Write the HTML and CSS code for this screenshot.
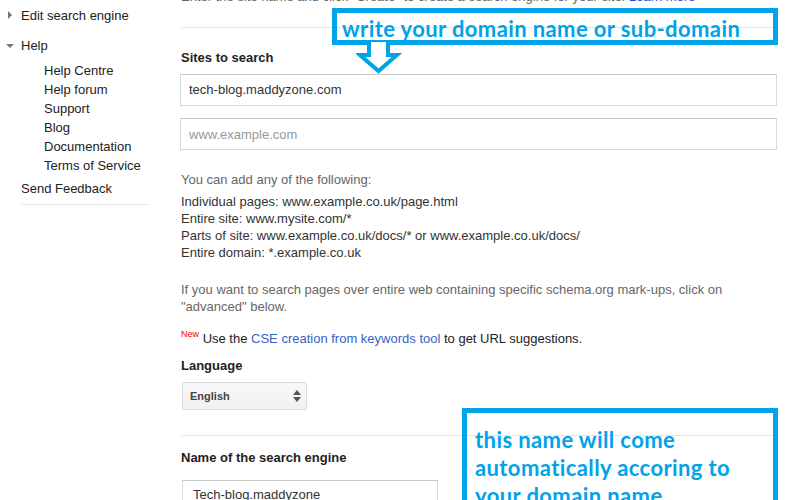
FILE: index.html
```html
<!DOCTYPE html>
<html>
<head>
<meta charset="utf-8">
<link rel="stylesheet" href="styles.css">
</head>
<body>
<div class="page">
  <aside class="sidebar">
    <div class="nav-item"><span class="tri tri-right"></span>Edit search engine</div>
    <div class="nav-item nav-help"><span class="tri tri-down"></span>Help</div>
    <ul class="sub">
      <li>Help Centre</li>
      <li>Help forum</li>
      <li>Support</li>
      <li>Blog</li>
      <li>Documentation</li>
      <li>Terms of Service</li>
    </ul>
    <div class="feedback">Send Feedback</div>
    <div class="side-rule"></div>
  </aside>
  <main class="main">
    <p class="intro">Enter the site name and click "Create" to create a search engine for your site. <a class="link-top">Learn more</a></p>
    <div class="rule rule-top"></div>
    <h3 class="label label-sites">Sites to search</h3>
    <div class="input input-first">tech-blog.maddyzone.com</div>
    <div class="input input-second placeholder">www.example.com</div>
    <p class="gray p-add">You can add any of the following:</p>
    <div class="examples">
      <div>Individual pages: www.example.co.uk/page.html</div>
      <div>Entire site: www.mysite.com/*</div>
      <div>Parts of site: www.example.co.uk/docs/* or www.example.co.uk/docs/</div>
      <div>Entire domain: *.example.co.uk</div>
    </div>
    <p class="gray p-schema">If you want to search pages over entire web containing specific schema.org mark-ups, click on<br>"advanced" below.</p>
    <p class="p-new"><sup class="new">New</sup> Use the <a class="link">CSE creation from keywords tool</a> to get URL suggestions.</p>
    <h3 class="label label-lang">Language</h3>
    <div class="select">
      <span>English</span>
      <svg class="sel-arrows" width="8" height="12" viewBox="0 0 8 12"><polygon points="4,0 8,5 0,5" fill="#555"/><polygon points="0,7 8,7 4,12" fill="#555"/></svg>
    </div>
    <div class="rule rule-mid"></div>
    <h3 class="label label-name">Name of the search engine</h3>
    <div class="input input-name">Tech-blog.maddyzone</div>
  </main>
</div>

<div class="note note-top">write your domain name or sub-domain</div>
<svg class="note-arrow" width="46" height="36" viewBox="0 0 46 36"><polygon points="13,0 13,15 4,15 22.5,31 41,15 32,15 32,0" fill="#fff" stroke="#00a2e8" stroke-width="4" stroke-linejoin="miter"/></svg>
<div class="note note-bottom">this name will come<br>automatically accoring to<br>your domain name</div>
</body>
</html>
```

FILE: styles.css
```css
html, body {
  margin: 0;
  padding: 0;
  background: #fff;
  overflow: hidden;
  height: 500px;
}
body {
  font-family: "Liberation Sans", Arial, sans-serif;
  font-size: 13px;
  line-height: 17px;
  color: #222;
}
.page {
  display: flex;
  align-items: flex-start;
}
.sidebar {
  width: 181px;
  flex: none;
  padding-top: 7px;
}
.nav-item {
  position: relative;
  padding-left: 21px;
  line-height: 17px;
}
.nav-help {
  margin-top: 13px;
}
.tri {
  position: absolute;
  width: 0;
  height: 0;
}
.tri-right {
  left: 8px;
  top: 4px;
  border-top: 4px solid transparent;
  border-bottom: 4px solid transparent;
  border-left: 4px solid #777;
}
.tri-down {
  left: 6px;
  top: 7px;
  border-left: 4px solid transparent;
  border-right: 4px solid transparent;
  border-top: 4px solid #777;
}
.sub {
  list-style: none;
  margin: 7px 0 0 0;
  padding: 0 0 0 44px;
}
.sub li {
  line-height: 19px;
}
.feedback {
  margin-top: 4px;
  padding-left: 21px;
  line-height: 19px;
}
.side-rule {
  margin: 6px 0 0 21px;
  width: 127px;
  border-top: 1px solid #e5e5e5;
}
.main {
  width: 596px;
  flex: none;
}
p { margin: 0; }
.intro {
  margin-top: -12px;
  color: #666;
  white-space: nowrap;
}
.link-top { color: #15c; }
.link { color: #3a5fc4; }
.rule {
  border-top: 1px solid #e5e5e5;
}
.rule-top { margin-top: 22px; margin-right: -1px; }
.label {
  margin: 0;
  font-size: 13px;
  font-weight: bold;
  line-height: 17px;
  color: #222;
}
.label-sites { margin-top: 21px; }
.input {
  box-sizing: border-box;
  height: 32px;
  border: 1px solid #d9d9d9;
  border-top-color: #c8c8c8;
  padding: 0 8px;
  line-height: 30px;
  color: #333;
  margin-left: -1px;
}
.input-first { margin-top: 8px; }
.input-second { margin-top: 12px; line-height: 32px; }
.placeholder { color: #999; }
.gray { color: #666; }
.p-add { margin-top: 21px; }
.examples { margin-top: 5px; color: #333; }
.p-schema { margin-top: 20px; }
.p-new { margin-top: 15px; color: #222; }
.new {
  color: #e00;
  font-size: 9px;
  vertical-align: 6px;
  line-height: 0;
}
.label-lang { margin-top: 10px; }
.select {
  box-sizing: border-box;
  margin-top: 8px;
  margin-left: 1px;
  width: 125px;
  height: 28px;
  border: 1px solid #dcdcdc;
  border-radius: 2px;
  background: linear-gradient(#f8f8f8, #f1f1f1);
  display: flex;
  align-items: center;
  justify-content: space-between;
  padding: 0 5px 0 7px;
  font-size: 11px;
  font-weight: bold;
  color: #444;
}
.rule-mid { margin-top: 25px; }
.label-name { margin-top: 13px; }
.input-name {
  margin-top: 14px;
  margin-left: 1px;
  width: 256px;
  height: 32px;
  padding-left: 10px;
  line-height: 28px;
}
.note {
  position: absolute;
  box-sizing: border-box;
  border: 5px solid #00a2e8;
  color: #00a2e8;
  font-family: Lato, "Open Sans", sans-serif;
  font-weight: bold;
  font-size: 22px;
  letter-spacing: 0.4px;
}
.note-top {
  left: 332px;
  top: 8px;
  width: 446px;
  height: 37px;
  padding-left: 5px;
  line-height: 32px;
}
.note-bottom {
  left: 462px;
  top: 408px;
  width: 316px;
  height: 120px;
  padding: 13px 0 0 8px;
  line-height: 28px;
}
.note-arrow {
  position: absolute;
  left: 356px;
  top: 40px;
}
```
